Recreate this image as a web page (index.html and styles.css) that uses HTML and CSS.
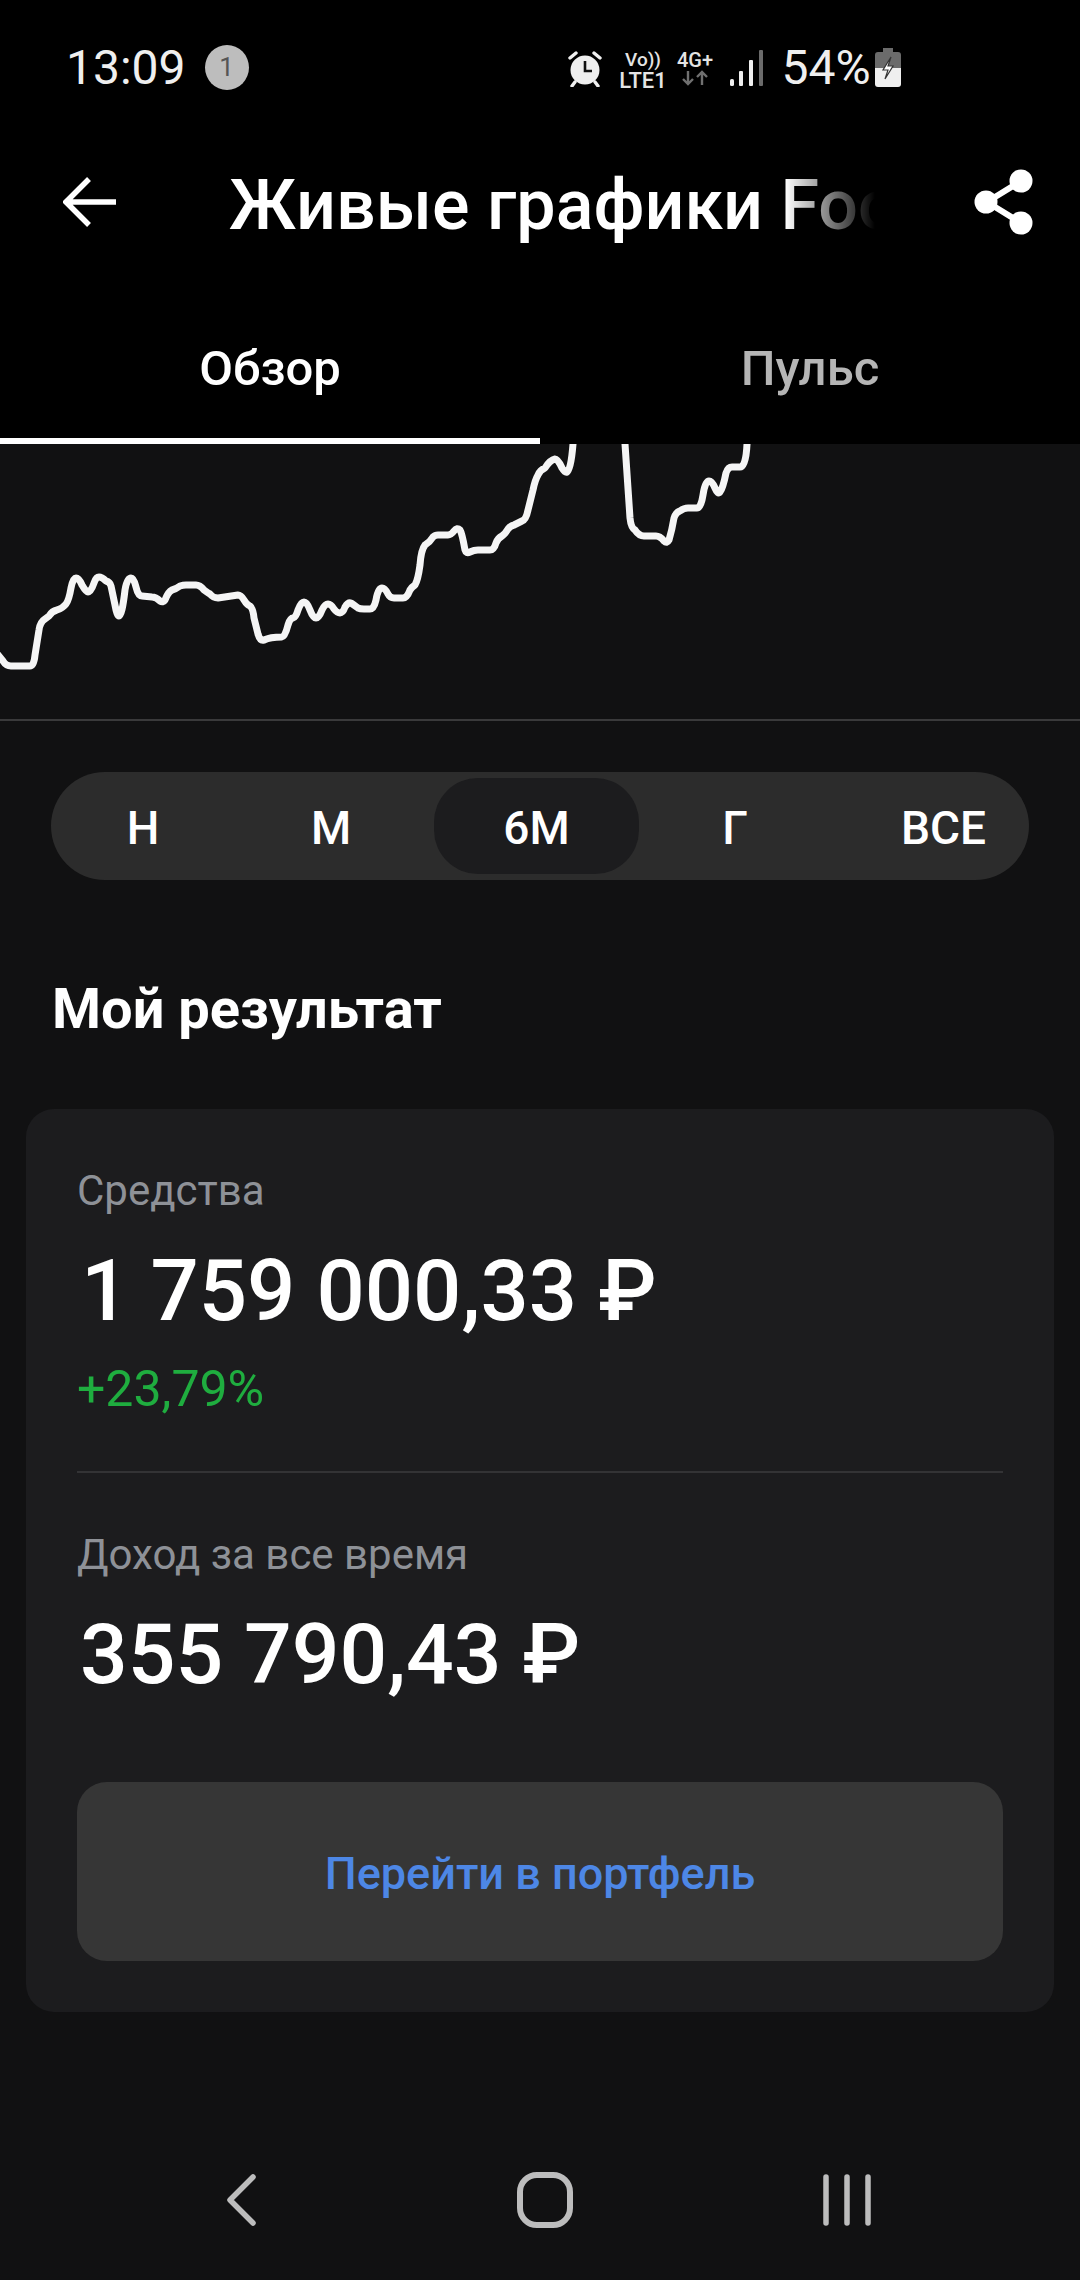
FILE: index.html
```html
<!DOCTYPE html>
<html lang="ru">
<head>
    <meta charset="UTF-8">
    <meta name="viewport" content="width=device-width, initial-scale=1.0">
    <title>Живые графики</title>
    <link rel="stylesheet" href="styles.css">
</head>
<body>
    <!-- Header -->
    <div class="header">
        <div class="status-bar">
            <span class="clock">13:09</span>
            <span class="badge">1</span>
            <div class="status-right">
                <svg class="alarm" width="34" height="37" viewBox="0 0 34 37">
                    <circle cx="17" cy="20" r="14.5" fill="#efefef"/>
                    <path d="M17 11v10h7" fill="none" stroke="#111" stroke-width="2.6"/>
                    <path d="M2 8l6-5M32 8l-6-5M7 32l-3 4M27 32l3 4" stroke="#efefef" stroke-width="3.4" stroke-linecap="round"/>
                </svg>
                <div class="net net-volte"><span>Vo))</span><span class="net-lte">LTE1</span></div>
                <div class="net net-4g">
                    <span>4G+</span>
                    <svg width="28" height="16" viewBox="0 0 28 16">
                        <path d="M7 1v13M2 9l5 5 5-5M21 15V2M16 7l5-5 5 5" fill="none" stroke="#707070" stroke-width="2.4"/>
                    </svg>
                </div>
                <svg class="signal" width="33" height="36" viewBox="0 0 33 36">
                    <rect x="0" y="29" width="4" height="7" rx="1.5" fill="#efefef"/>
                    <rect x="9" y="21" width="4" height="15" rx="1" fill="#efefef"/>
                    <rect x="19" y="10" width="4" height="26" rx="1" fill="#efefef"/>
                    <rect x="29" y="0" width="4" height="36" rx="1" fill="#6b6b6b"/>
                </svg>
                <span class="percent">54%</span>
                <svg class="battery" width="26" height="39" viewBox="0 0 26 39">
                    <path d="M8 0h10v4h5a3 3 0 0 1 3 3v13H0V7a3 3 0 0 1 3-3h5z" fill="#6b6b6b"/>
                    <path d="M0 20h26v16a3 3 0 0 1-3 3H3a3 3 0 0 1-3-3z" fill="#efefef"/>
                    <path d="M16 9l-8 13h5l-3 9 8-13h-5l3-9z" fill="#fff" stroke="#333" stroke-width="1.2"/>
                </svg>
            </div>
        </div>

        <div class="toolbar">
            <svg class="back" width="53" height="50" viewBox="0 0 53 50">
                <path d="M26 2L3 25l23 23M3 25h50" fill="none" stroke="#fff" stroke-width="5.5"/>
            </svg>
            <div class="title">Живые графики Foo</div>
            <svg class="share" width="60" height="66" viewBox="0 0 60 66">
                <path d="M47 12L13 33l34 21" fill="none" stroke="#fff" stroke-width="6"/>
                <circle cx="47" cy="12" r="11.5" fill="#fff"/>
                <circle cx="12" cy="33" r="11.5" fill="#fff"/>
                <circle cx="47" cy="54" r="11.5" fill="#fff"/>
            </svg>
        </div>

        <div class="tabs">
            <div class="tab active">Обзор</div>
            <div class="tab">Пульс</div>
        </div>
    </div>

    <!-- Chart -->
    <div class="chart">
        <svg width="1080" height="275" viewBox="0 444 1080 275">
            <path class="line" d="M-6 650L3 661Q6 666 11 666L30 666Q34 666 35 655L39 630Q40 622 45 619L49 616Q52 611 57 610Q63 608 66 604Q69 600 71 588Q73 578 76 578Q79 578 82 585Q86 592 88 592Q91 592 94 583Q96 577 99 577Q102 577 106 581Q110 582 111 586L115 605Q117 616 119 616Q122 616 125 590Q127 578 131 578Q134 578 136 587Q138 596 142 596L152 597Q156 597 160 601Q163 603 165 600Q168 592 172 590Q176 589 180 586Q183 585 186 585L196 585Q200 585 204 590Q208 593 210 594Q213 598 218 598L238 595Q241 595 244 600Q247 605 250 606Q253 608 254 618L258 634Q260 641 264 640Q270 637 282 637Q285 637 288 625Q290 618 293 618Q296 617 298 610Q301 602 304 602Q307 602 310 610Q313 618 316 618Q319 618 322 610Q325 604 328 604Q331 604 334 609Q337 613 340 613Q343 613 345 607Q348 602 351 603Q354 605 358 608Q360 609 364 609L370 609Q374 609 376 600Q378 588 382 588Q385 588 388 594Q390 598 394 598L403 598Q407 598 410 590Q412 587 415 585Q418 580 420 565Q421 550 425 545Q430 542 433 537Q435 535 438 535L448 535Q451 535 454 531Q457 527 460 530Q462 533 465 550Q466 554 470 552Q474 550 478 550L490 550Q494 550 496 543Q498 538 502 536Q505 534 508 529Q510 526 514 525L522 521Q526 520 528 510L533 490Q535 480 538 475Q540 470 545 468Q550 460 555 459Q558 459 562 468Q565 473 567 472Q571 470 573 444L580 400"/>
            <path class="line" d="M620 400L625 444L630 518Q631 528 635 530Q639 536 644 536L656 536Q660 536 664 541Q667 544 669 540Q672 530 674 518Q676 512 680 511Q684 508 688 508L697 508Q701 508 703 495Q705 481 709 481Q712 481 715 488Q718 495 720 492Q723 488 726 473Q728 467 732 467L740 467Q746 467 747 444L752 420"/>
        </svg>
    </div>

    <!-- Period switch -->
    <div class="periods">
        <div class="period">Н</div>
        <div class="period">М</div>
        <div class="period active">6М</div>
        <div class="period">Г</div>
        <div class="period period-all">ВСЕ</div>
    </div>

    <h2 class="section-title">Мой результат</h2>

    <!-- Result card -->
    <div class="card">
        <div class="card-label">Средства</div>
        <div class="card-sum">1 759 000,33 ₽</div>
        <div class="card-change">+23,79%</div>
        <div class="card-divider"></div>
        <div class="card-label">Доход за все время</div>
        <div class="card-sum card-sum-small">355 790,43 ₽</div>
        <div class="card-button">Перейти в портфель</div>
    </div>

    <!-- Android nav -->
    <div class="nav-bar">
        <svg class="nav-back" width="29" height="52" viewBox="0 0 29 52">
            <path d="M26 3L3 26l23 23" fill="none" stroke="#bdbdbd" stroke-width="5.5" stroke-linecap="round" stroke-linejoin="round"/>
        </svg>
        <svg class="nav-home" width="56" height="56" viewBox="0 0 56 56">
            <rect x="3" y="3" width="50" height="50" rx="17" fill="none" stroke="#bdbdbd" stroke-width="6"/>
        </svg>
        <svg class="nav-recent" width="48" height="52" viewBox="0 0 48 52">
            <path d="M3 3v46M24 3v46M45 3v46" fill="none" stroke="#bdbdbd" stroke-width="5.5" stroke-linecap="round"/>
        </svg>
    </div>
</body>
</html>
```

FILE: styles.css
```css
* { box-sizing: border-box; }

body {
    margin: 0;
    width: 1080px;
    height: 2280px;
    overflow: hidden;
    background-color: #111112;
    color: #fff;
    font-family: Roboto, "Liberation Sans", sans-serif;
}

/* Header */
.header { height: 444px; background-color: #000; }

.status-bar { height: 136px; padding: 45px 0 0 66px; display: flex; align-items: flex-start; }
.clock { font-size: 48px; line-height: 45px; color: #efefef; }
.badge {
    width: 44px;
    height: 45px;
    margin-left: 19px;
    border-radius: 50%;
    background-color: #bdbdbd;
    color: #555;
    font-size: 26px;
    line-height: 45px;
    text-align: center;
}
.status-right { margin-left: 319px; display: flex; align-items: flex-start; }
.alarm { margin-top: 5px; }
.net { display: flex; flex-direction: column; align-items: center; font-weight: 500; color: #e4e4e4; }
.net-volte { width: 45px; margin: 5px 0 0 19px; font-size: 19px; line-height: 20px; }
.net-lte { font-size: 22px; line-height: 21px; }
.net-4g { width: 37px; margin: 5px 0 0 11px; font-size: 20px; line-height: 20px; }
.net-4g svg { display: block; }
.signal { margin: 5px 0 0 16px; }
.percent { margin-left: 19px; font-size: 48px; line-height: 45px; color: #efefef; }
.battery { margin: 3px 0 0 4px; }

.toolbar { height: 130px; display: flex; align-items: flex-start; }
.back { margin: 41px 0 0 63px; }
.title {
    width: 646px;
    margin: 30px 0 0 113px;
    overflow: hidden;
    white-space: nowrap;
    font-size: 70px;
    line-height: 78px;
    font-weight: 500;
    -webkit-mask-image: linear-gradient(to right, #000 86%, transparent 100%);
    mask-image: linear-gradient(to right, #000 86%, transparent 100%);
}
.share { margin: 33px 0 0 99px; }

.tabs { height: 178px; display: flex; }
.tab {
    width: 540px;
    height: 178px;
    padding-top: 73px;
    text-align: center;
    color: #b5b5b5;
    font-size: 49px;
    line-height: 60px;
    font-weight: 500;
}
.tab.active { color: #fff; border-bottom: 6px solid #fff; }

/* Chart */
.chart { height: 277px; border-bottom: 2px solid #3a3a3b; overflow: hidden; }
.chart svg { display: block; }
.line { fill: none; stroke: #f5f5f5; stroke-width: 7; stroke-linejoin: round; stroke-linecap: round; }

/* Period switch */
.periods {
    width: 978px;
    height: 108px;
    margin: 51px 0 0 51px;
    padding: 6px 7px;
    border-radius: 54px;
    background-color: #2c2c2c;
    display: grid;
    grid-template-columns: 170px 206px 205px 192px 191px;
}
.period {
    height: 96px;
    font-size: 46px;
    line-height: 100px;
    font-weight: 500;
    text-align: center;
    white-space: nowrap;
}
.period.active { background-color: #1c1c1e; border-radius: 44px; }
.period-all { padding-left: 34px; }

.section-title {
    margin: 99px 0 70px 52px;
    font-size: 56px;
    line-height: 60px;
    font-weight: 700;
}

/* Card */
.card {
    width: 1028px;
    margin-left: 26px;
    padding: 57px 51px 51px;
    border-radius: 28px;
    background-color: #1c1c1e;
}
.card-label { font-size: 42px; line-height: 50px; color: #8e9197; }
.card-sum { margin: 25px 0 0 4px; font-size: 85px; line-height: 100px; font-weight: 500; white-space: nowrap; }
.card-sum-small { margin-left: 3px; font-size: 84px; }
.card-change { margin-top: 23px; font-size: 50px; line-height: 50px; color: #1fad3f; }
.card-divider { height: 2px; margin: 57px 0; background-color: #333335; }
.card-button {
    height: 179px;
    margin-top: 77px;
    border-radius: 30px;
    background-color: #363636;
    color: #4d87e6;
    font-size: 45px;
    line-height: 184px;
    font-weight: 500;
    text-align: center;
}

/* Android nav */
.nav-bar { margin-top: 160px; padding-left: 227px; height: 56px; display: flex; align-items: center; }
.nav-home { margin-left: 261px; }
.nav-recent { margin-left: 250px; }
```
